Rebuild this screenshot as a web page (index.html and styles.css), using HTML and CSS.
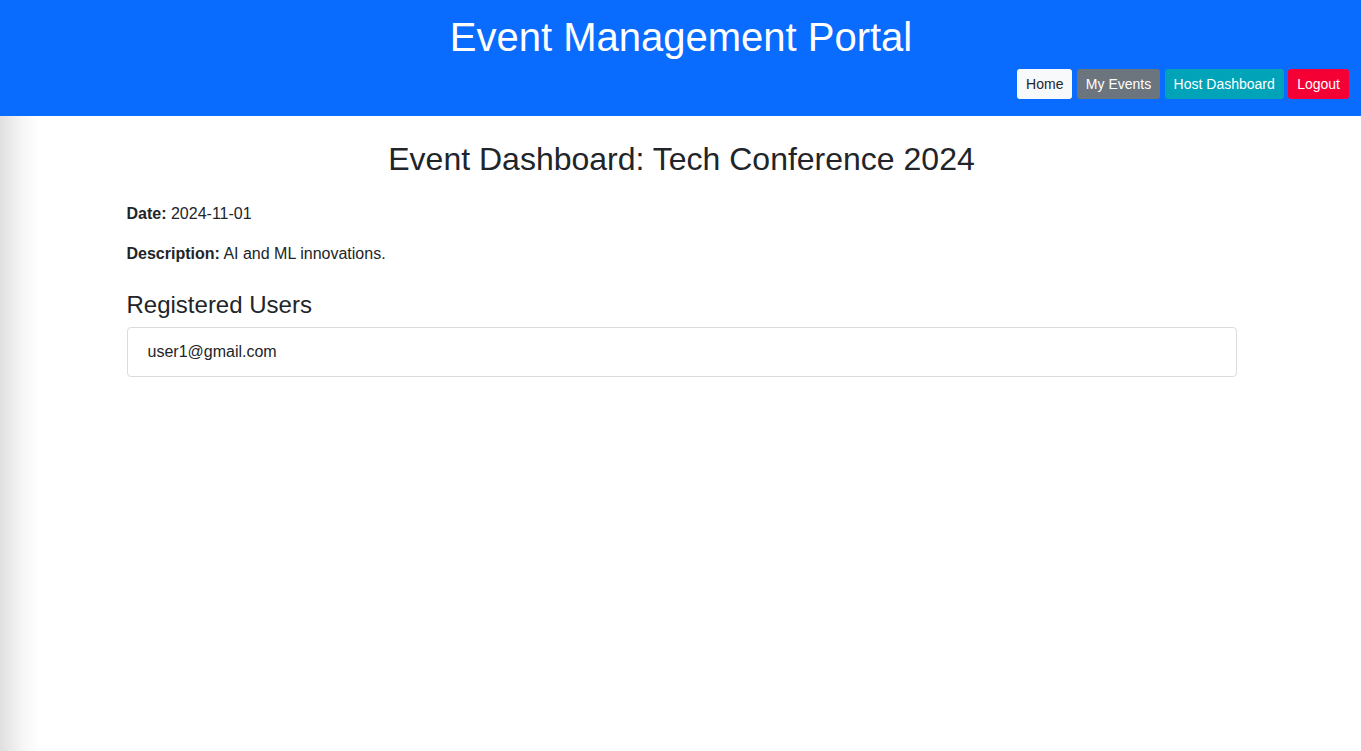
FILE: index.html
```html
<!DOCTYPE html>
<html lang="en">
<head>
<meta charset="utf-8">
<title>Event Dashboard</title>
<link rel="stylesheet" href="styles.css">
</head>
<body>
<header class="site-header">
  <h1 class="site-title">Event Management Portal</h1>
  <nav class="nav">
    <a class="btn btn-light" href="#">Home</a>
    <a class="btn btn-secondary" href="#">My Events</a>
    <a class="btn btn-info" href="#">Host Dashboard</a>
    <a class="btn btn-danger" href="#">Logout</a>
  </nav>
</header>
<main class="container">
  <h2 class="page-title">Event Dashboard: Tech Conference 2024</h2>
  <p class="meta"><strong>Date:</strong> 2024-11-01</p>
  <p class="meta"><strong>Description:</strong> AI and ML innovations.</p>
  <h4 class="section-title">Registered Users</h4>
  <ul class="list-group">
    <li class="list-item">user1@gmail.com</li>
  </ul>
</main>
<div class="edge-shade"></div>
</body>
</html>
```
FILE: styles.css
```css
* { box-sizing: border-box; }
html, body { margin: 0; padding: 0; }
body {
  font-family: "Liberation Sans", Arial, Helvetica, sans-serif;
  font-size: 16px;
  line-height: 1.5;
  color: #212529;
  background: #fff;
  min-height: 751px;
}
.site-header {
  background: #0a6bff;
  color: #fff;
  height: 116px;
  padding: 12px 12px 0;
  display: flex;
  flex-direction: column;
}
.site-title {
  margin: 0 0 0 1px;
  text-align: center;
  font-size: 40px;
  font-weight: 400;
  line-height: 50px;
}
.nav {
  display: flex;
  justify-content: flex-end;
  gap: 4.4px;
  margin-top: 7px;
}
.btn {
  display: inline-block;
  font-size: 14px;
  line-height: 20px;
  padding: 5px 9px;
  border-radius: 3px;
  text-decoration: none;
  color: #fff;
}
.btn-light { background: #f8f9fa; color: #212529; }
.btn-secondary { background: #6c757d; }
.btn-info { background: #00a3b8; }
.btn-danger { background: #f50035; }
.container {
  width: 1110px;
  margin-left: calc(50% - 554px);
  padding-top: 24px;
}
.page-title {
  margin: 0 0 24px;
  text-align: center;
  font-size: 32px;
  font-weight: 400;
  line-height: 38px;
}
.meta {
  margin: 0 0 16px;
  font-size: 16px;
  line-height: 24px;
}
.meta strong { font-weight: 700; }
.section-title {
  margin: 24px 0 8px;
  font-size: 24px;
  font-weight: 400;
  line-height: 29px;
}
.list-group {
  list-style: none;
  margin: 0;
  padding: 0;
}
.list-item {
  border: 1px solid #dcdcdc;
  border-radius: 4px;
  padding: 12px 20px;
  font-size: 16px;
  line-height: 24px;
}
.edge-shade {
  position: fixed;
  left: 0;
  top: 116px;
  bottom: 0;
  width: 40px;
  background: linear-gradient(to right, rgba(0,0,0,0.12), rgba(0,0,0,0.03) 60%, rgba(0,0,0,0));
  pointer-events: none;
}
```
